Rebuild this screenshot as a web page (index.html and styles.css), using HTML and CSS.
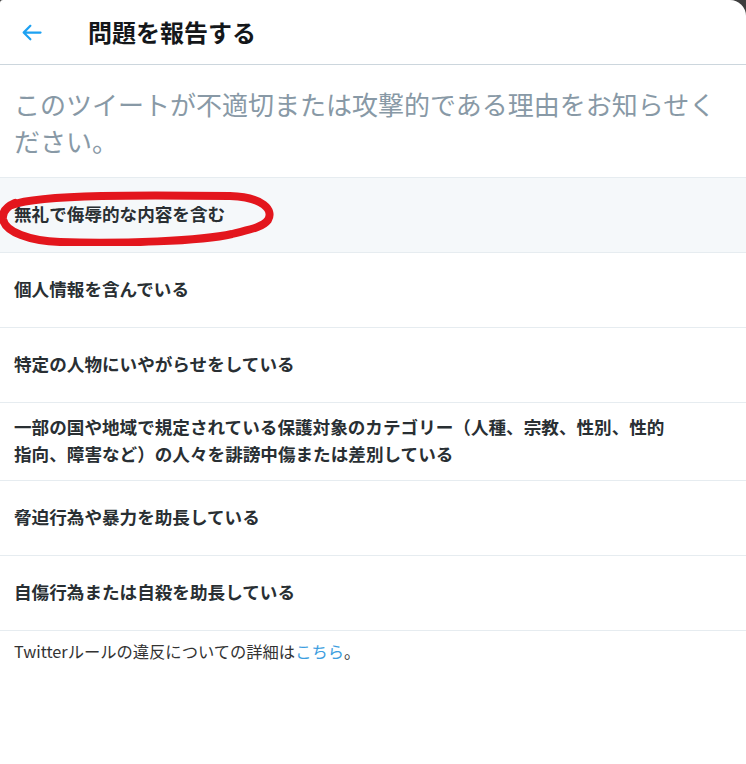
FILE: index.html
```html
<!DOCTYPE html>
<html lang="ja">
<head>
    <meta charset="UTF-8">
    <meta name="viewport" content="width=device-width, initial-scale=1.0">
    <title>問題を報告する</title>
    <link rel="stylesheet" href="styles.css">
</head>
<body>
    <div class="modal">
        <div class="modal-header">
            <button class="back-btn" type="button" aria-label="戻る">
                <svg viewBox="0 0 24 24" width="27" height="27">
                    <path d="M20 11H7.414l4.293-4.293c.39-.39.39-1.023 0-1.414s-1.023-.39-1.414 0l-6 6c-.39.39-.39 1.023 0 1.414l6 6c.195.195.45.293.707.293s.512-.098.707-.293c.39-.39.39-1.023 0-1.414L7.414 13H20c.553 0 1-.447 1-1s-.447-1-1-1z"></path>
                </svg>
            </button>
            <h2 class="modal-title">問題を報告する</h2>
        </div>

        <p class="prompt">このツイートが不適切または攻撃的である理由をお知らせください。</p>

        <ul class="reason-list">
            <li class="reason selected">
                <span>無礼で侮辱的な内容を含む</span>
                <!-- red marker circle drawn over the first option -->
                <svg class="marker" viewBox="0 0 280 60" width="280" height="60">
                    <path d="M12 19 C40 8 150 9 230 10 C263 11 274 24 268 34 C262 42 247 44 232 48 C202 55 120 58 60 56 C30 55 5 46 3 33 C2 25 8 20 15 17"></path>
                </svg>
            </li>
            <li class="reason"><span>個人情報を含んでいる</span></li>
            <li class="reason"><span>特定の人物にいやがらせをしている</span></li>
            <li class="reason"><span>一部の国や地域で規定されている保護対象のカテゴリー（人種、宗教、性別、性的指向、障害など）の人々を誹謗中傷または差別している</span></li>
            <li class="reason"><span>脅迫行為や暴力を助長している</span></li>
            <li class="reason"><span>自傷行為または自殺を助長している</span></li>
        </ul>

        <p class="footnote">Twitterルールの違反についての詳細は<a href="#">こちら</a>。</p>
    </div>
</body>
</html>
```

FILE: styles.css
```css
/* report dialog */
body {
    margin: 0;
    background-color: #3d3d3d;
    font-family: "Noto Sans CJK JP", "Noto Sans", sans-serif;
    color: #14171a;
}

.modal {
    background-color: #fff;
    min-height: 764px;
    border-top-left-radius: 3px;
    border-top-right-radius: 16px;
}

.modal-header {
    display: flex;
    align-items: center;
    height: 64px;
    padding-left: 18px;
    border-bottom: 1px solid #ccd6dd;
}

.back-btn {
    display: flex;
    padding: 0;
    border: none;
    background: none;
    cursor: pointer;
}

.back-btn svg {
    fill: #1da1f2;
}

.modal-title {
    margin: 0 0 0 43px;
    font-size: 24px;
    font-weight: bold;
    line-height: 30px;
}

.prompt {
    margin: 0;
    padding: 20px 14px 18px;
    font-size: 26px;
    line-height: 37px;
    color: #8899a6;
    border-bottom: 1px solid #e6ecf0;
}

.reason-list {
    list-style: none;
    margin: 0;
    padding: 0;
}

.reason {
    position: relative;
    display: flex;
    align-items: center;
    min-height: 75px;
    padding: 10px 14px 13px;
    box-sizing: border-box;
    border-bottom: 1px solid #e6ecf0;
    font-size: 17.6px;
    font-weight: bold;
    line-height: 27px;
    color: #292f33;
    cursor: pointer;
}

.reason span {
    max-width: 660px;
}

.reason.selected {
    background-color: #f5f8fa;
}

.marker {
    position: absolute;
    left: 0;
    top: 8px;
    pointer-events: none;
}

.marker path {
    fill: none;
    stroke: #e3161d;
    stroke-width: 8;
    stroke-linecap: round;
}

.footnote {
    margin: 0;
    padding: 9px 14px;
    font-size: 16.3px;
    line-height: 22px;
    color: #333;
}

.footnote a {
    color: #3c9ee0;
    text-decoration: none;
}
```
